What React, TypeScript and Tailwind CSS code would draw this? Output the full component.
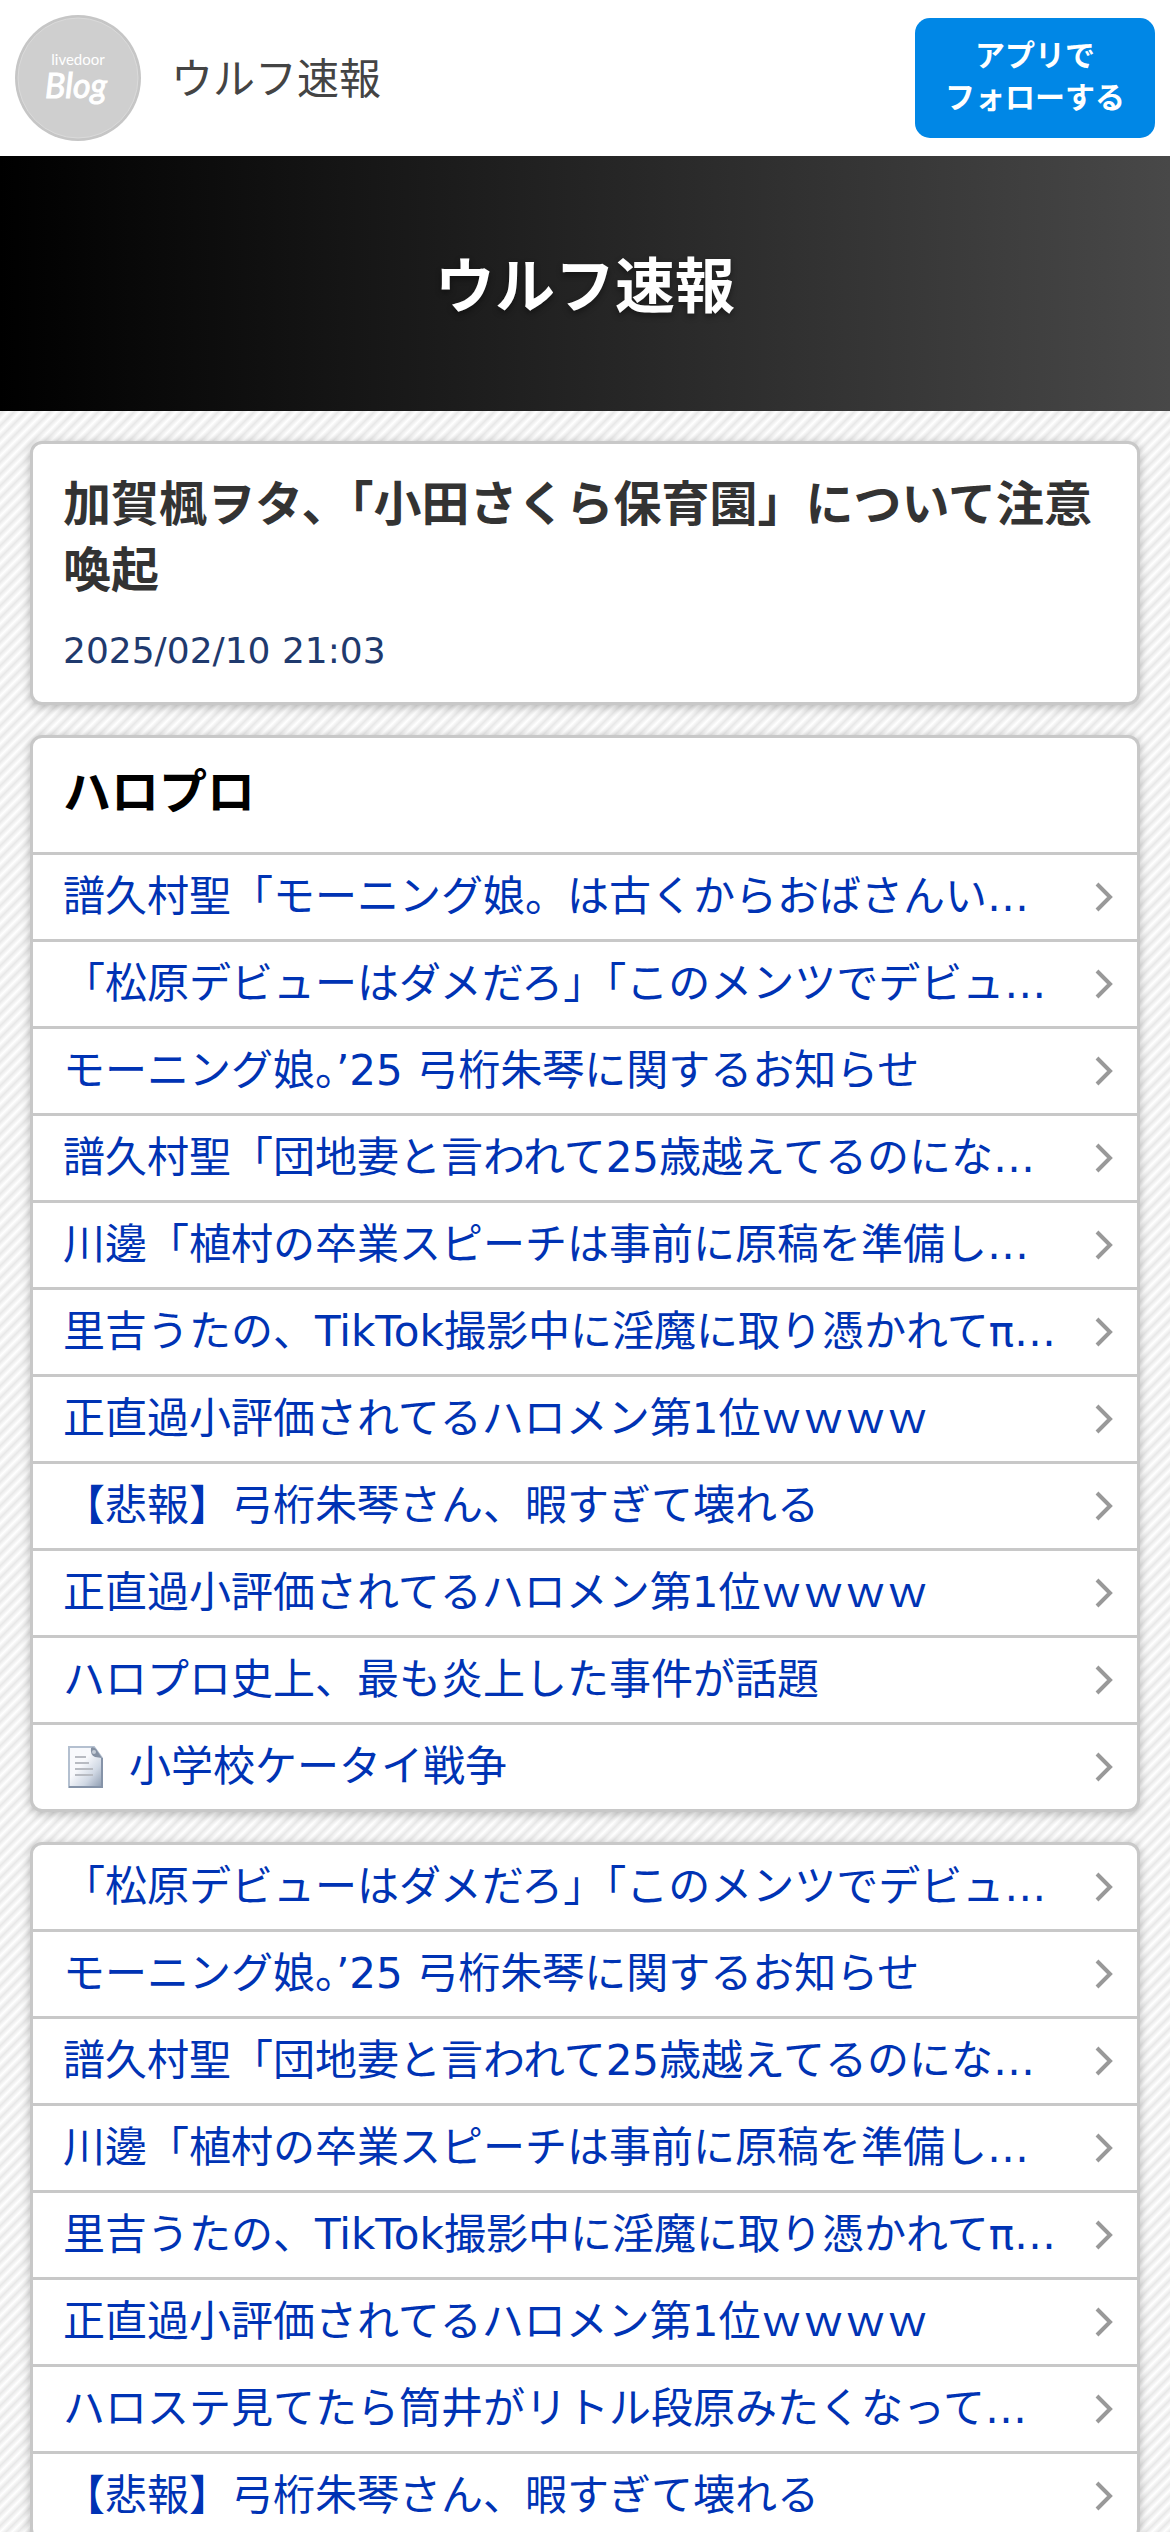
const BLOG_TITLE = 'ウルフ速報';

interface Entry {
  title: string;
  memo?: boolean;
}

const RELATED: Entry[] = [
  { title: '譜久村聖「モーニング娘。は古くからおばさんい…' },
  { title: '「松原デビューはダメだろ」「このメンツでデビュ…' },
  { title: 'モーニング娘。’25 弓桁朱琴に関するお知らせ' },
  { title: '譜久村聖「団地妻と言われて25歳越えてるのにな…' },
  { title: '川邊「植村の卒業スピーチは事前に原稿を準備し…' },
  { title: '里吉うたの、TikTok撮影中に淫魔に取り憑かれてπ…' },
  { title: '正直過小評価されてるハロメン第1位ｗｗｗｗ' },
  { title: '【悲報】弓桁朱琴さん、暇すぎて壊れる' },
  { title: '正直過小評価されてるハロメン第1位ｗｗｗｗ' },
  { title: 'ハロプロ史上、最も炎上した事件が話題' },
  { title: '小学校ケータイ戦争', memo: true },
];

const LATEST: Entry[] = [
  { title: '「松原デビューはダメだろ」「このメンツでデビュ…' },
  { title: 'モーニング娘。’25 弓桁朱琴に関するお知らせ' },
  { title: '譜久村聖「団地妻と言われて25歳越えてるのにな…' },
  { title: '川邊「植村の卒業スピーチは事前に原稿を準備し…' },
  { title: '里吉うたの、TikTok撮影中に淫魔に取り憑かれてπ…' },
  { title: '正直過小評価されてるハロメン第1位ｗｗｗｗ' },
  { title: 'ハロステ見てたら筒井がリトル段原みたくなって…' },
  { title: '【悲報】弓桁朱琴さん、暇すぎて壊れる' },
];

const CARD =
  'rounded-[12px] border-[3px] border-[#c8c8c8] bg-white shadow-[0_2px_10px_rgba(0,0,0,0.25)] overflow-hidden';

function BlogAvatar() {
  return (
    <svg viewBox="0 0 126 126" className="size-[126px] shrink-0" role="img" aria-label="livedoor Blog">
      <circle cx="63" cy="63" r="63" fill="#c6c6c6" />
      <circle cx="63" cy="63" r="60" fill="#cfcfcf" stroke="#dadada" strokeWidth="1" />
      <text x="63" y="50" textAnchor="middle" fontSize="15" fill="#fff" fontFamily="Lato, sans-serif">
        livedoor
      </text>
      <text
        x="61"
        y="83"
        textAnchor="middle"
        fontSize="34"
        fontStyle="italic"
        fill="#fff"
        stroke="#fff"
        strokeWidth="1"
        fontFamily="Lato, sans-serif"
      >
        Blog
      </text>
    </svg>
  );
}

function MemoIcon() {
  return (
    <svg viewBox="0 0 48 48" className="mr-[18px] size-[48px] shrink-0" aria-hidden="true">
      <defs>
        <linearGradient id="memoPaper" x1="0" y1="0" x2="1" y2="1">
          <stop offset="0.4" stopColor="#f8f9fc" />
          <stop offset="0.7" stopColor="#d0d8e4" />
          <stop offset="1" stopColor="#8d9bb0" />
        </linearGradient>
      </defs>
      <path d="M6 4h25l8 11v29H6z" fill="url(#memoPaper)" stroke="#b4c0d0" strokeWidth="2" />
      <path d="M6 44h33V15" fill="none" stroke="#8593a8" strokeWidth="2" />
      <path d="M28 5q2-2 5 1l6 9-7-1q-5-2-4-9z" fill="#8591a3" />
      <circle cx="31" cy="9" r="2" fill="#c3cbd6" />
      <path d="M12 14h11M12 20h14M12 26h18M12 32h18" stroke="#b8bbc2" strokeWidth="2" />
    </svg>
  );
}

function Chevron() {
  return (
    <svg viewBox="0 0 18 30" className="h-[30px] w-[18px] shrink-0" fill="none" aria-hidden="true">
      <path d="M2 2l13 13L2 28" stroke="#999" strokeWidth="4" />
    </svg>
  );
}

function EntryList({ entries }: { entries: Entry[] }) {
  return (
    <ul className="divide-y-[3px] divide-[#c8c8c8]">
      {entries.map((entry, idx) => (
        <li key={idx}>
          <a href="#" className="flex h-[84px] items-center pl-[30px] pr-[24px] text-[42px] leading-[48px] text-[#0033b4]">
            {entry.memo && <MemoIcon />}
            <span className="min-w-0 flex-1 truncate">{entry.title}</span>
            <Chevron />
          </a>
        </li>
      ))}
    </ul>
  );
}

export default function App() {
  return (
    <div className="min-h-screen bg-[linear-gradient(135deg,#ffffff,#e8e8e8_25%,#ffffff_50%,#e8e8e8_75%,#ffffff)] bg-[length:12px_12px] font-['DejaVu_Sans','Noto_Sans_CJK_JP',sans-serif]">
      <header className="flex h-[156px] items-center bg-white px-[15px]">
        <BlogAvatar />
        <a href="#" className="ml-[30px] flex-1 pt-[3px] text-[42px] leading-[48px] text-[#444]">
          {BLOG_TITLE}
        </a>
        <button
          type="button"
          className="h-[120px] w-[240px] rounded-[15px] bg-[#0087e6] pb-[3px] text-[30px] font-bold leading-[42px] text-white"
        >
          アプリで
          <br />
          フォローする
        </button>
      </header>

      <div className="flex h-[255px] items-center justify-center bg-linear-to-r/srgb from-black to-[#484848] pt-[6px]">
        <h1 className="text-[60px] font-bold leading-[72px] text-white [text-shadow:0_3px_6px_rgba(0,0,0,0.4)]">
          {BLOG_TITLE}
        </h1>
      </div>

      <main className="flex flex-col gap-[30px] p-[30px]">
        <article className={`${CARD} px-[30px] py-[27px]`}>
          <h2 className="text-[48px] font-bold leading-[66px] text-[#333]">
            加賀楓ヲタ、「小田さくら保育園」について注意喚起
          </h2>
          <time dateTime="2025-02-10T21:03" className="mt-[24px] block text-[36px] leading-[48px] text-[#1f3a6e]">
            2025/02/10 21:03
          </time>
        </article>

        <section className={CARD}>
          <h2 className="flex h-[117px] items-center border-b-[3px] border-[#c8c8c8] px-[30px] pb-[6px] text-[48px] font-bold leading-[66px] text-black">
            ハロプロ
          </h2>
          <EntryList entries={RELATED} />
        </section>

        <section className={CARD}>
          <EntryList entries={LATEST} />
        </section>
      </main>
    </div>
  );
}
